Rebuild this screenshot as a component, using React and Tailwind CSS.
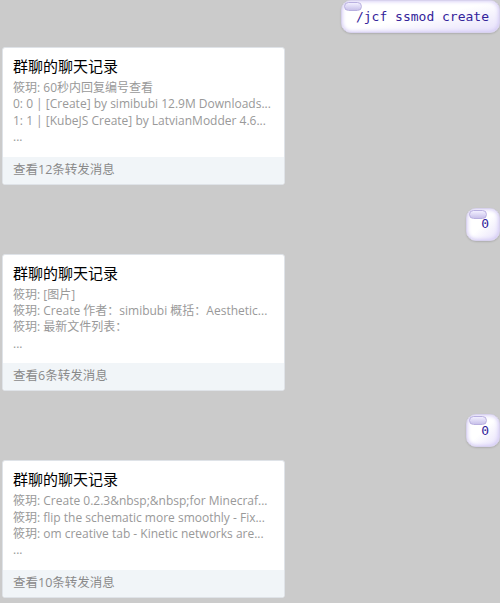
import React from "react";

const cards = [
  {
    lines: [
      "筱玥: 60秒内回复编号查看",
      "0: 0 | [Create] by simibubi 12.9M Downloads...",
      "1: 1 | [KubeJS Create] by LatvianModder 4.6...",
      "...",
    ],
    count: 12,
  },
  {
    lines: [
      "筱玥: [图片]",
      "筱玥: Create 作者：simibubi 概括：Aesthetic...",
      "筱玥: 最新文件列表：",
      "...",
    ],
    count: 6,
  },
  {
    lines: [
      "筱玥: Create 0.2.3&nbsp;&nbsp;for Minecraf...",
      "筱玥: flip the schematic more smoothly - Fix...",
      "筱玥: om creative tab - Kinetic networks are...",
      "...",
    ],
    count: 10,
  },
];

function Bubble({ text }) {
  return (
    <div className="flex justify-end">
      <div className="relative h-[33px] pl-[14px] pr-[10px] flex items-center rounded-[10px] bg-gradient-to-br from-white via-white to-[#e6e0fa] border border-[#d8d2ee] shadow-[inset_0_0_4px_#c9bdf3,0_1px_2px_rgba(0,0,0,0.15)]">
        <div className="absolute left-[2px] top-[1px] w-[18px] h-[9px] rounded-full bg-gradient-to-b from-[#f2efff] to-[#c9c2ea] border border-[#b9b0e0]" />
        <span className="relative text-[13px] text-[#33239a] [font-family:'DejaVu_Sans_Mono',monospace]">
          {text}
        </span>
      </div>
    </div>
  );
}

function ForwardCard({ lines, count }) {
  return (
    <div className="w-[283px] ml-[2px] bg-white rounded-[3px] border border-[#dfe3e8] overflow-hidden">
      <div className="px-[10px] pt-[6px] pb-[11px]">
        <div className="text-[15px] text-black leading-[24px]">群聊的聊天记录</div>
        <div className="mt-[2px] text-[12px] text-[#999999] leading-[16.4px]">
          {lines.map((l, i) => (
            <div key={i} className="whitespace-nowrap">
              {l}
            </div>
          ))}
        </div>
      </div>
      <div className="h-[27px] px-[10px] flex items-center bg-[#f1f5f8] text-[12.5px] text-[#8a8a8a]">
        查看{count}条转发消息
      </div>
    </div>
  );
}

export default function App() {
  return (
    <div className="w-[500px] h-[603px] overflow-hidden bg-[#cbcbcb] [font-family:'Open_Sans','Noto_Sans_CJK_SC',sans-serif]">
      <Bubble text="/jcf ssmod create" />
      <div className="mt-[14px]">
        <ForwardCard {...cards[0]} />
      </div>
      <div className="mt-[23px]">
        <Bubble text="0" />
      </div>
      <div className="mt-[13px]">
        <ForwardCard {...cards[1]} />
      </div>
      <div className="mt-[23px]">
        <Bubble text="0" />
      </div>
      <div className="mt-[13px]">
        <ForwardCard {...cards[2]} />
      </div>
    </div>
  );
}
